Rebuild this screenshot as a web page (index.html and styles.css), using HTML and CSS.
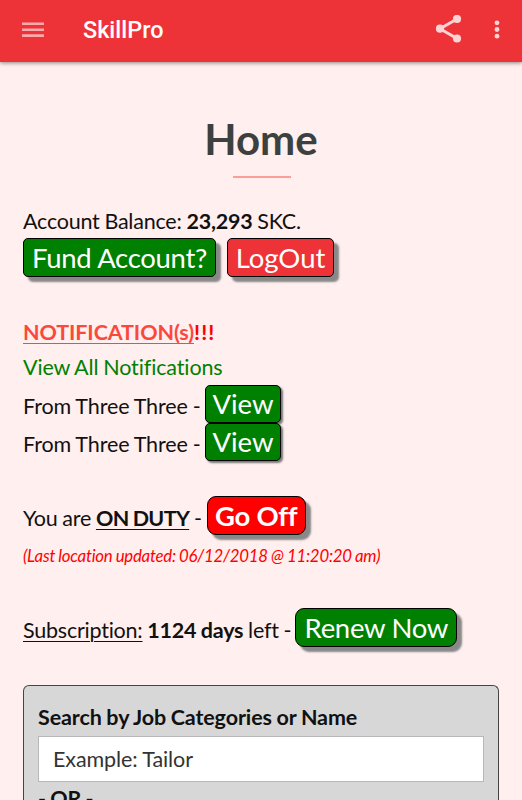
FILE: index.html
```html
<!DOCTYPE html>
<html lang="en">
<head>
    <meta charset="UTF-8">
    <meta name="viewport" content="width=device-width, initial-scale=1.0">
    <title>SkillPro</title>
    <link rel="stylesheet" href="styles.css">
</head>
<body>
    <header class="navbar">
        <svg class="icon-menu" width="22" height="16" viewBox="0 0 22 16">
            <path d="M0 1.8h22M0 7.8h22M0 13.6h22"/>
        </svg>
        <span class="brand">SkillPro</span>
        <svg class="icon-share" width="28" height="30" viewBox="0 0 28 30">
            <path d="M22 4L5 13.7l17 9.8"/>
            <circle cx="22" cy="4" r="4.1"/>
            <circle cx="5" cy="13.7" r="4.1"/>
            <circle cx="22" cy="23.5" r="4.1"/>
        </svg>
        <svg class="icon-more" width="6" height="20" viewBox="0 0 6 20">
            <circle cx="3" cy="2.8" r="2.4"/>
            <circle cx="3" cy="9.5" r="2.4"/>
            <circle cx="3" cy="16.2" r="2.4"/>
        </svg>
    </header>

    <main class="content">
        <h1>Home</h1>
        <hr class="divider">

        <!-- Account -->
        <p class="balance">Account Balance: <b>23,293</b> SKC.</p>
        <div class="row actions">
            <button class="btn green fund">Fund Account?</button>
            <button class="btn crimson logout">LogOut</button>
        </div>

        <!-- Notifications -->
        <p class="notif-title"><u>NOTIFICATION(s)</u>!!!</p>
        <p class="view-all">View All Notifications</p>
        <div class="notif-list">
            <div class="row"><span class="from">From Three Three -</span><button class="btn green view">View</button></div>
            <div class="row"><span class="from">From Three Three -</span><button class="btn green view">View</button></div>
        </div>

        <!-- Duty status -->
        <div class="row duty">
            <span>You are <b><u>ON DUTY</u></b> -</span>
            <button class="btn red off">Go Off</button>
        </div>
        <p class="updated">(Last location updated: 06/12/2018 @ 11:20:20 am)</p>

        <!-- Subscription -->
        <div class="row subscription">
            <span><u>Subscription:</u> <b>1124 days</b> left -</span>
            <button class="btn green renew">Renew Now</button>
        </div>

        <!-- Search -->
        <form class="search">
            <label for="q">Search by Job Categories or Name</label>
            <input id="q" type="text" placeholder="Example: Tailor">
            <p class="or">- OR -</p>
        </form>
    </main>
</body>
</html>
```

FILE: styles.css
```css
* {
    box-sizing: border-box;
}

body {
    margin: 0;
    height: 800px;
    overflow: hidden;
    background-color: #ffefee;
    color: #111;
    font-family: 'Lato', sans-serif;
    font-size: 21.5px;
    line-height: 28px;
    letter-spacing: -0.22px;
    word-spacing: -0.5px;
}

p {
    margin: 0;
    white-space: nowrap;
}

u {
    text-decoration-thickness: 1px;
    text-underline-offset: 3px;
}

/* Top bar */
.navbar {
    display: flex;
    align-items: center;
    height: 62px;
    padding: 0 22px 3px;
    background-color: #ee3338;
    box-shadow: 0 1px 4px rgba(0, 0, 0, 0.45);
}

.brand {
    margin-left: 39px;
    margin-right: auto;
    padding-top: 1px;
    color: #fff;
    font-family: 'Roboto', sans-serif;
    font-size: 23.4px;
    font-weight: 500;
    letter-spacing: 0;
}

.icon-menu {
    stroke: #f8aaac;
    stroke-width: 2.6;
}

.icon-share {
    margin-right: 31px;
    fill: #fcd3d4;
}

.icon-share path {
    fill: none;
    stroke: #fcd3d4;
    stroke-width: 3;
}

.icon-more {
    fill: #fcd3d4;
}

/* Page */
.content {
    padding: 52px 23px 0;
}

h1 {
    margin: 0;
    color: #3c403f;
    font-size: 42px;
    line-height: 50px;
    letter-spacing: 0;
    text-align: center;
}

.divider {
    width: 58px;
    height: 2px;
    margin: 12px auto 29px 210px;
    border: 0;
    background-color: #fb9e98;
}

.row {
    display: flex;
    align-items: baseline;
    white-space: nowrap;
}

/* Buttons */
.btn {
    height: 39px;
    padding: 0;
    border: 1px solid #000;
    border-radius: 5px;
    box-shadow: 5px 5px 2px #888;
    color: #fff;
    font-family: inherit;
    font-size: 27.5px;
    line-height: 37px;
}

.green {
    background-color: #008000;
}

.crimson {
    background-color: #ee3338;
}

.red {
    background-color: #f00;
}

.actions {
    gap: 11px;
    margin-top: 3px;
}

.fund {
    width: 193px;
    letter-spacing: -0.3px;
}

.logout {
    width: 107px;
}

/* Notifications */
.notif-title {
    margin-top: 41px;
    color: #f00;
    font-weight: bold;
    letter-spacing: 1.1px;
}

.notif-title u {
    color: #f9493d;
    letter-spacing: -0.1px;
}

.view-all {
    margin-top: 7px;
    color: #008000;
    letter-spacing: -0.12px;
}

.notif-list {
    margin-top: 4px;
}

.from {
    width: 182px;
    letter-spacing: -0.1px;
}

.view {
    width: 76px;
    height: 38px;
    line-height: 36px;
    box-shadow: 2px 2px 2px #777;
}

/* Duty */
.duty {
    gap: 5px;
    margin-top: 35px;
}

.duty u {
    letter-spacing: -0.65px;
}

.off {
    width: 99px;
    border-radius: 9px;
    font-weight: bold;
    letter-spacing: -0.3px;
}

.updated {
    margin-top: 9px;
    color: #f00;
    font-size: 16.8px;
    font-style: italic;
    line-height: 24px;
    letter-spacing: -0.23px;
}

/* Subscription */
.subscription {
    gap: 4px;
    margin-top: 40px;
}

.renew {
    width: 162px;
    border-radius: 9px;
    letter-spacing: -0.3px;
}

/* Search panel */
.search {
    height: 115px;
    margin-top: 38px;
    padding: 17px 14px 0;
    border: 1px solid #444;
    border-bottom: 0;
    border-radius: 6px 6px 0 0;
    background-color: #d7d7d7;
}

.search label {
    display: block;
    font-weight: bold;
    letter-spacing: -0.1px;
}

.search input {
    display: block;
    width: 100%;
    height: 46px;
    margin-top: 5px;
    padding: 0 14px;
    border: 1px solid #b8b8b8;
    font-family: inherit;
    font-size: 21.5px;
    letter-spacing: -0.1px;
}

.search input::placeholder {
    color: #333;
}

.or {
    margin-top: 2px;
    font-weight: bold;
}
```
